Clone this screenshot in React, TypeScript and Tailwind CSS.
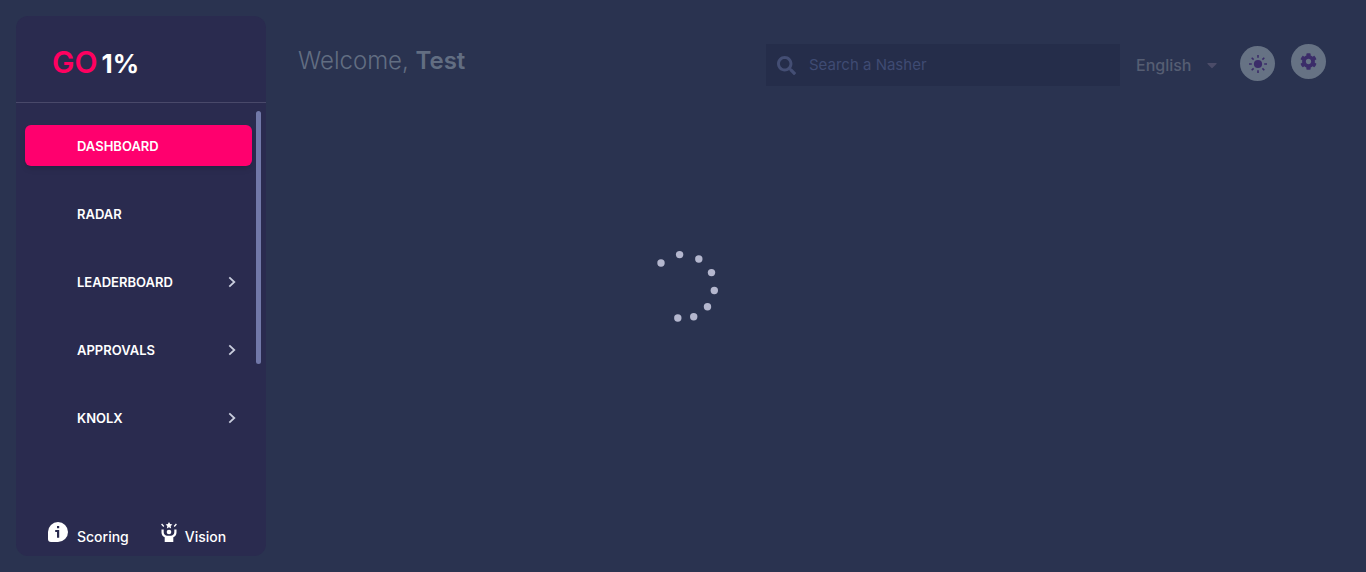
import React from "react";
import { FaSearch, FaCog, FaCaretDown } from "react-icons/fa";

type NavItem = { label: string; active?: boolean; expandable?: boolean };

const navItems: NavItem[] = [
  { label: "DASHBOARD", active: true },
  { label: "RADAR" },
  { label: "LEADERBOARD", expandable: true },
  { label: "APPROVALS", expandable: true },
  { label: "KNOLX", expandable: true },
];

const spinnerDots: [number, number][] = [
  [9, 13],
  [27.6, 4.6],
  [46.8, 9],
  [59.5, 22.6],
  [62.3, 40.5],
  [55.5, 56.8],
  [41.7, 66.7],
  [25.8, 68],
];

function Chevron() {
  return (
    <svg viewBox="0 0 8 12" className="mb-0.5 h-3 w-2" fill="none" stroke="#c9cddd" strokeWidth="1.8" aria-hidden="true">
      <path d="M1.3 1.3 L6.3 6 L1.3 10.7" />
    </svg>
  );
}

function SunIcon() {
  return (
    <svg viewBox="0 0 18 18" className="size-[18px]" stroke="#3b2c69" strokeWidth="1.6" aria-hidden="true">
      <circle cx="9" cy="9" r="4.1" fill="#3b2c69" stroke="none" />
      <path d="M9 0v2.8M9 15.2V18M0 9h2.8M15.2 9H18M2.7 2.7l1.9 1.9M13.4 13.4l1.9 1.9M2.7 15.3l1.9-1.9M13.4 4.6l1.9-1.9" />
    </svg>
  );
}

function InfoIcon() {
  return (
    <svg viewBox="0 0 20 20" className="size-5" aria-hidden="true">
      <path fill="#fff" d="M10 0a10 10 0 0 1 0 20H3a3 3 0 0 1-3-3V10A10 10 0 0 1 10 0Z" />
      <path fill="#2a2b4f" d="M9 4h2.2v2.2H9ZM7.2 8h4v7.8H9v-5.8H7.2Z" />
    </svg>
  );
}

function VisionIcon() {
  return (
    <svg viewBox="0 0 16 20" className="h-5 w-4" aria-hidden="true">
      <path fill="#fff" d="M8 0l1.1 2.1 2.3.3-1.7 1.6.4 2.4L8 5.3 5.9 6.4l.4-2.4-1.7-1.6 2.3-.3Z" />
      <circle cx="8" cy="10" r="2.3" fill="#fff" />
      <path fill="none" stroke="#fff" strokeWidth="1.3" d="M.6 2l2.2 2.5M15.4 2l-2.2 2.5" />
      <path fill="#fff" d="M.5 7.5h2.2v2.7c0 2.2 1.8 3.6 3.5 3.6h3.6c1.7 0 3.5-1.4 3.5-3.6V7.5h2.2v2.9c0 2.2-1.3 3.9-3.2 4.8V20H3.7v-4.8C1.8 14.3.5 12.6.5 10.4Z" />
    </svg>
  );
}

function Sidebar() {
  return (
    <aside className="m-4 flex w-[250px] shrink-0 flex-col rounded-xl bg-[#2a2b4f] text-white">
      <a href="#home" className="flex h-[87px] items-center border-b border-[#49496a] pt-2 pl-9">
        <span className="flex items-baseline gap-1">
          <span className="text-3xl font-semibold text-[#ff0060]">GO</span>
          <span className="text-[26px] font-bold">1%</span>
        </span>
      </a>
      <div className="flex flex-1 gap-1 pt-2 pr-[5px] pl-[9px]">
        <nav aria-label="Main" className="flex flex-1 flex-col gap-[27px] pt-3.5">
          {navItems.map((item) => (
            <a
              key={item.label}
              href={"#" + item.label.toLowerCase()}
              aria-current={item.active ? "page" : undefined}
              className={
                item.active
                  ? "flex h-[41px] items-center rounded-md bg-[#ff006e] pt-0.5 pl-[52px] text-[13px] font-semibold shadow-md"
                  : "flex h-[41px] items-center justify-between pt-0.5 pr-4 pl-[52px] text-[13px] font-semibold"
              }
            >
              {item.label}
              {item.expandable && <Chevron />}
            </a>
          ))}
        </nav>
        <div className="h-[253px] w-[5px] rounded-full bg-[#7178a8]" />
      </div>
      <footer className="flex gap-8 px-8 pb-[9px] text-sm font-medium">
        <a href="#scoring" className="flex gap-[9px]">
          <InfoIcon />
          <span className="pt-[5px]">Scoring</span>
        </a>
        <a href="#vision" className="flex gap-2">
          <VisionIcon />
          <span className="pt-[5px]">Vision</span>
        </a>
      </footer>
    </aside>
  );
}

export default function App() {
  return (
    <div className="flex min-h-screen bg-[#2a3350] font-['Inter',sans-serif]">
      <Sidebar />
      <main className="flex flex-1 flex-col pt-11 pr-10 pl-4">
        <header className="flex items-start justify-between">
          <h1 className="pt-px text-2xl font-light text-[#626e82]">
            Welcome, <strong className="font-semibold">Test</strong>
          </h1>
          <div className="flex items-start gap-4">
            <label className="flex h-[42px] w-[354px] items-center gap-[13px] bg-[#252d4a] px-[11px]">
              <FaSearch className="size-[19px] text-[#444e74]" aria-hidden="true" />
              <input
                type="search"
                aria-label="Search a Nasher"
                placeholder="Search a Nasher"
                className="min-w-0 flex-1 bg-transparent text-[15px] text-[#8088a8] outline-none placeholder:text-[#3f4b73]"
              />
            </label>
            <div className="grid h-[42px] w-[88px] items-center">
              <select
                aria-label="Language"
                className="col-start-1 row-start-1 w-full appearance-none bg-transparent font-medium text-[#565e73] outline-none"
              >
                <option>English</option>
              </select>
              <FaCaretDown className="pointer-events-none col-start-1 row-start-1 mr-1 size-4 justify-self-end text-[#4b4c68]" aria-hidden="true" />
            </div>
            <button aria-label="Toggle theme" className="mt-0.5 flex size-[35px] items-center justify-center rounded-full bg-[#667284]">
              <SunIcon />
            </button>
            <button aria-label="Settings" className="flex size-[35px] items-center justify-center rounded-full bg-[#667284]">
              <FaCog className="size-[17px] text-[#3b2c69]" />
            </button>
          </div>
        </header>
      </main>
      <div role="status" aria-label="Loading" className="pointer-events-none fixed inset-0 flex items-center justify-center">
        <svg viewBox="0 0 62 72" className="h-[72px] w-[62px] overflow-visible" fill="#b4b7ce" aria-hidden="true">
          {spinnerDots.map(([x, y]) => (
            <circle key={x} cx={x} cy={y} r="3.7" />
          ))}
        </svg>
      </div>
    </div>
  );
}
